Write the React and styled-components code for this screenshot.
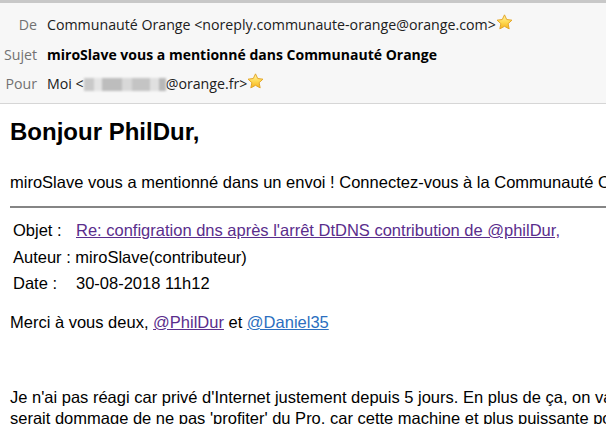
import styled, { createGlobalStyle } from "styled-components";

const GlobalStyle = createGlobalStyle`
  html, body {
    margin: 0;
    padding: 0;
    background: #ffffff;
    overflow: hidden;
  }
`;

const Page = styled.div`
  width: 606px;
  height: 424px;
  overflow: hidden;
`;

/* ====== Message header ====== */
const HeaderPane = styled.div`
  border-top: 3px solid #c8c8c8;
  border-bottom: 1px solid #d6d6d6;
  background: #f7f7f7;
  padding: 7px 0 4px;
  display: grid;
  grid-template-columns: 37px auto;
  grid-auto-rows: 29.5px;
  column-gap: 10px;
  align-items: center;
  font-family: "Open Sans", "Noto Sans", sans-serif;
  font-size: 14.2px;
`;

const FieldLabel = styled.span`
  text-align: right;
  color: #727272;
  white-space: nowrap;
`;

const FieldValue = styled.span`
  display: flex;
  align-items: center;
  color: ${(p) => (p.$strong ? "#000" : "#202020")};
  font-weight: ${(p) => (p.$strong ? 700 : 400)};
  font-size: ${(p) => (p.$strong ? "14px" : "14.2px")};
  white-space: nowrap;
`;

const Redacted = styled.span`
  display: inline-block;
  width: 82px;
  height: 13px;
  margin-top: 2px;
  background: linear-gradient(
    90deg,
    #c9c9c9 0 12%,
    #e4e4e4 12% 22%,
    #bdbdbd 22% 46%,
    #d8d8d8 46% 58%,
    #c4c4c4 58% 80%,
    #e0e0e0 80% 92%,
    #b8b8b8 92% 100%
  );
  filter: blur(0.8px);
`;

const StarIcon = () => (
  <svg width="17" height="17" viewBox="0 0 16 16" style={{ marginLeft: 0, marginTop: -5 }}>
    <defs>
      <linearGradient id="starFill" x1="0" y1="0" x2="0" y2="1">
        <stop offset="0" stopColor="#fff5b0" />
        <stop offset="0.5" stopColor="#ffdb55" />
        <stop offset="1" stopColor="#f4b21a" />
      </linearGradient>
    </defs>
    <path
      d="M8 0.8 L10.1 5.2 L15 5.8 L11.4 9.1 L12.4 14 L8 11.6 L3.6 14 L4.6 9.1 L1 5.8 L5.9 5.2 Z"
      fill="url(#starFill)"
      stroke="#e3a425"
      strokeWidth="0.9"
      strokeLinejoin="round"
    />
  </svg>
);

/* ====== Message body ====== */
const MailBody = styled.div`
  padding: 0 10px;
  font-family: "Liberation Sans", Arial, sans-serif;
  font-size: 16.5px;
  color: #000;
  white-space: nowrap;
`;

const Greeting = styled.h1`
  margin: 15px 0 0;
  font-size: 24px;
  line-height: 26px;
  font-weight: 700;
`;

const Para = styled.p`
  margin: ${(p) => p.$mt || "0"} 0 0;
  line-height: ${(p) => p.$lh || "20px"};
`;

const Rule = styled.hr`
  margin: 14px 0 0;
  border: 0;
  border-top: 2px solid #858585;
  width: 640px;
`;

const InfoTable = styled.div`
  margin-top: 10px;
  display: grid;
  grid-template-columns: 63px auto;
  grid-auto-rows: 26.5px;
  align-items: center;
  padding-left: 3px;
`;

const Mention = styled.a`
  color: ${(p) => (p.$visited ? "#5a2d8c" : "#2b6fc0")};
  text-decoration: underline;
`;

export default function App() {
  return (
    <Page>
      <GlobalStyle />
      <HeaderPane>
        <FieldLabel>De</FieldLabel>
        <FieldValue>
          Communauté Orange &lt;noreply.communaute-orange@orange.com&gt;
          <StarIcon />
        </FieldValue>
        <FieldLabel>Sujet</FieldLabel>
        <FieldValue $strong>miroSlave vous a mentionné dans Communauté Orange</FieldValue>
        <FieldLabel>Pour</FieldLabel>
        <FieldValue>
          Moi &lt;
          <Redacted />
          @orange.fr&gt;
          <StarIcon />
        </FieldValue>
      </HeaderPane>

      <MailBody>
        <Greeting>Bonjour PhilDur,</Greeting>
        <Para $mt="27px">
          miroSlave vous a mentionné dans un envoi ! Connectez-vous à la Communauté Orange
        </Para>
        <Rule />
        <InfoTable>
          <span>Objet :</span>
          <span>
            <Mention $visited>Re: configration dns après l'arrêt DtDNS contribution de @philDur,</Mention>
          </span>
          <span style={{ gridColumn: "1 / 3" }}>Auteur : miroSlave(contributeur)</span>
          <span>Date :</span>
          <span>30-08-2018 11h12</span>
        </InfoTable>
        <Para $mt="15px">
          Merci à vous deux, <Mention $visited>@PhilDur</Mention> et <Mention>@Daniel35</Mention>
        </Para>
        <Para $mt="55px" $lh="21px">
          Je n'ai pas réagi car privé d'Internet justement depuis 5 jours. En plus de ça, on va
          <br />
          serait dommage de ne pas 'profiter' du Pro, car cette machine et plus puissante pour
        </Para>
      </MailBody>
    </Page>
  );
}
